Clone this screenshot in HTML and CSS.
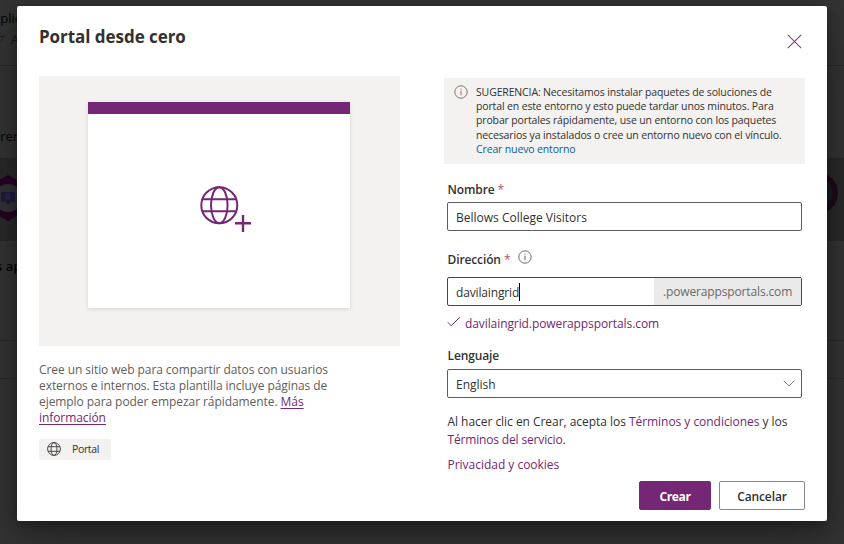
FILE: index.html
```html
<!DOCTYPE html>
<html lang="es">
<head>
<meta charset="utf-8">
<title>Portal desde cero</title>
<link rel="stylesheet" href="styles.css">
</head>
<body>
<div class="backdrop">
  <div class="page-head">
    <div class="page-title">Aplic</div>
    <div class="page-sub"><svg width="9" height="10" viewBox="0 0 9 10"><path d="M0 1.500H3.500L1 6.500M3.500 1.500V0" fill="none" stroke="#1a1a1a" stroke-width=".8"/></svg><span>A</span></div>
  </div>
  <div class="page-section">eren</div>
  <div class="page-band">
    <svg class="hex" width="32" height="48" viewBox="0 0 32 48"><path d="M8 1L27 12V36L8 47L-11 36V12Z" fill="#240522"/><circle cx="8" cy="24" r="14" fill="#343136"/><rect x="1" y="18" width="14" height="10" fill="#201b3d"/><circle cx="8" cy="22.500" r="2" fill="none" stroke="#393452"/><path d="M6 28h4v2H6z" fill="#201d2a"/></svg>
    <svg class="ring" width="24" height="48" viewBox="0 0 24 48"><circle cx="-3" cy="24" r="18" fill="#151c1c" stroke="#1c0a1b" stroke-width="6"/><circle cx="-3" cy="24" r="15" fill="none" stroke="#2b1822"/></svg>
  </div>
  <div class="page-section second">s ap</div>
  <div class="page-row"></div>
</div>

<main class="dialog">
  <header class="head">
    <h1>Portal desde cero</h1>
    <svg class="close" width="15" height="15" viewBox="0 0 15 15"><path d="M.8.8L14.200 14.200M14.200.8L.8 14.200" fill="none" stroke="#7b467e" stroke-width="1.100"/></svg>
  </header>
  <div class="columns">
    <section class="left">
      <div class="preview">
        <div class="card">
          <svg class="globe-plus" width="52" height="47" viewBox="0 0 52 47"><g fill="none" stroke="#742774" stroke-width="2"><circle cx="19.300" cy="19.200" r="18"/><ellipse cx="19.300" cy="19.200" rx="8.300" ry="18"/><path d="M2.500 13.300H36M2.500 25.200H36"/><path d="M35 37.200H51M43 29V46" stroke-width="2.400"/></g></svg>
        </div>
      </div>
      <p class="desc">Cree un sitio web para compartir datos con usuarios<br>externos e internos. Esta plantilla incluye páginas de<br>ejemplo para poder empezar rápidamente. <a>Más<br>información</a></p>
      <div class="chip">
        <svg width="14" height="14" viewBox="0 0 14 14"><g fill="none" stroke="#4a4848"><circle cx="7" cy="7" r="6.400"/><ellipse cx="7" cy="7" rx="3" ry="6.400"/><path d="M1 4.700H13M1 9.300H13"/></g></svg>
        <span>Portal</span>
      </div>
    </section>
    <section class="right">
      <div class="tip">
        <svg width="14" height="14" viewBox="0 0 14 14"><circle cx="7" cy="7" r="6.200" fill="none" stroke="#7d7672"/><path d="M7 5.800V10.300M7 3.600V4.700" stroke="#a06f50"/></svg>
        <p>SUGERENCIA: Necesitamos instalar paquetes de soluciones de<br>portal en este entorno y esto puede tardar unos minutos. Para<br>probar portales rápidamente, use un entorno con los paquetes<br>necesarios ya instalados o cree un entorno nuevo con el vínculo.<br><a>Crear nuevo entorno</a></p>
      </div>
      <form class="form">
        <div class="label">Nombre <i>*</i></div>
        <div class="field"><span>Bellows College Visitors</span></div>
        <div class="label address"><span>Dirección <i>*</i></span>
          <svg width="14" height="14" viewBox="0 0 14 14"><circle cx="7" cy="7" r="6.200" fill="none" stroke="#605e5c" stroke-width=".9"/><path d="M7 5.800V10.300M7 3.600V4.700" stroke="#605e5c"/></svg>
        </div>
        <div class="field focus"><span class="typed">davilaingrid</span><span class="suffix">.powerappsportals.com</span></div>
        <div class="ok"><svg width="14" height="12" viewBox="0 0 14 12"><path d="M.8 6.300L4.200 9.800L12.800 1.200" fill="none" stroke="#742774"/></svg><span>davilaingrid.powerappsportals.com</span></div>
        <div class="label lang">Lenguaje</div>
        <div class="field select"><span>English</span><svg width="12" height="7" viewBox="0 0 12 7"><path d="M.7.7L6 6L11.300.7" fill="none" stroke="#8a8886"/></svg></div>
        <p class="terms">Al hacer clic en Crear, acepta los <a>Términos y condiciones</a> y los<br><a class="service">Términos del servicio</a>.</p>
        <p class="privacy"><a>Privacidad y cookies</a></p>
      </form>
      <div class="actions"><div class="btn primary">Crear</div><div class="btn">Cancelar</div></div>
    </section>
  </div>
</main>
</body>
</html>
```
FILE: styles.css
```css
* { box-sizing: border-box; }
html, body { margin: 0; width: 844px; height: 544px; overflow: hidden; }
body {
  background: #333;
  font: 12px/16px "Open Sans", "Noto Sans", sans-serif;
  color: #323130;
}
h1, p { margin: 0; }
svg { display: block; flex: none; }
a { color: #742774; }

/* Dimmed page behind the dialog */
.backdrop { width: 844px; height: 544px; color: #060606; }
.page-head { height: 66px; border-bottom: 1px solid #292929; padding-top: 9px; }
.page-title { font-size: 13px; line-height: 18px; margin-left: -8px; font-weight: 500; }
.page-sub { display: flex; align-items: center; gap: 2px; margin-top: 5px; color: #151515; }
.page-section { height: 92px; padding-top: 62px; margin-left: -7px; font-size: 13px; font-weight: 500; }
.page-band {
  height: 83px; background: #292929;
  display: flex; justify-content: space-between; align-items: center;
}
.ring { margin-bottom: 14px; }
.hex { margin-bottom: 4px; }
.second { height: 99px; padding-top: 17px; margin-left: -4px; font-weight: 600; }
.page-row { height: 39px; border-top: 1px solid #2a2a2a; border-bottom: 1px solid #2a2a2a; }

.dialog {
  position: absolute; left: 17px; top: 6px;
  width: 810px; height: 515px;
  padding: 19px 22px 0;
  background: #fff; border-radius: 2px;
  box-shadow: 0 25.6px 57.6px rgba(0, 0, 0, .22), 0 4.8px 14.4px rgba(0, 0, 0, .36);
}
.head { display: flex; justify-content: space-between; height: 51px; }
.head h1 { font-size: 17px; line-height: 24px; font-weight: 700; letter-spacing: -.05px; }
.close { margin: 9px 3px 0 0; }
.columns { display: flex; justify-content: space-between; }

.left { width: 361px; }
.preview { height: 270px; background: #f3f2f1; padding: 26px 49px; }
.card {
  width: 262px; height: 206px; background: #fff;
  border-top: 12px solid #742774;
  box-shadow: 0 1px 4px rgba(0, 0, 0, .13);
  padding: 72px 0 0 112px;
}
.desc { margin-top: 16px; color: #605e5c; letter-spacing: -.07px; white-space: nowrap; }
.desc a { text-decoration: underline; text-underline-offset: 2px; }
.chip {
  display: flex; align-items: center; gap: 11px;
  width: 72px; height: 21px; margin-top: 13px; padding-left: 8px;
  background: #f3f2f1; border-radius: 2px;
  font-size: 10.5px; letter-spacing: -.35px;
}
.chip svg { margin-top: -1px; }
.chip span { margin-top: -1px; }

.right { width: 361px; padding-top: 2px; }
.tip {
  display: flex; gap: 8px; height: 86px; padding: 7px 0 0 10px;
  background: #f3f2f1;
  font-size: 10.5px; line-height: 14.2px; letter-spacing: -.14px; white-space: nowrap;
}
.tip a { color: #0b5c9c; }

.form { padding: 0 3px; white-space: nowrap; }
.label { height: 16px; margin-top: 18px; padding-left: .5px; font-weight: 600; letter-spacing: -.12px; }
.label i { font-style: normal; font-weight: 400; color: #b5575b; }
.field {
  display: flex; align-items: center;
  height: 29px; margin-top: 4px; padding-left: 8px;
  border: 1px solid #605e5c; border-radius: 2px;
}
.field > span { padding-top: 2px; }
.address { display: flex; margin-top: 21px; }
.address svg { margin: -2px 0 0 8px; }
.focus { margin-top: 9px; border-color: #742774; }
.field > .typed { padding-top: 1px; border-right: 1px solid #000; letter-spacing: -.15px; line-height: 17px; }
.field > .suffix {
  width: 147px; margin-left: auto; padding: 0 0 0 9px;
  align-self: stretch; line-height: 27px;
  background: #eaeaea; color: #6b6967; letter-spacing: -.14px;
}
.ok { display: flex; gap: 4px; margin-top: 10px; color: #742774; letter-spacing: -.09px; }
.lang { margin-top: 16px; }
.select { margin-top: 5px; justify-content: space-between; padding-right: 6px; }
.terms { margin-top: 15px; padding-left: .5px; line-height: 18px; letter-spacing: -.04px; }
.service { letter-spacing: -.16px; }
.privacy { margin-top: 8px; padding-left: .5px; letter-spacing: -.02px; }

.actions { display: flex; justify-content: flex-end; gap: 8px; margin-top: 8px; }
.btn {
  width: 86px; height: 29px; line-height: 29px; text-align: center;
  border: 1px solid #8a8886; border-radius: 2px;
  font-weight: 600; letter-spacing: -.1px;
}
.primary { width: 72px; background: #742774; border-color: #742774; color: #fff; font-weight: 700; letter-spacing: -.4px; }
```
